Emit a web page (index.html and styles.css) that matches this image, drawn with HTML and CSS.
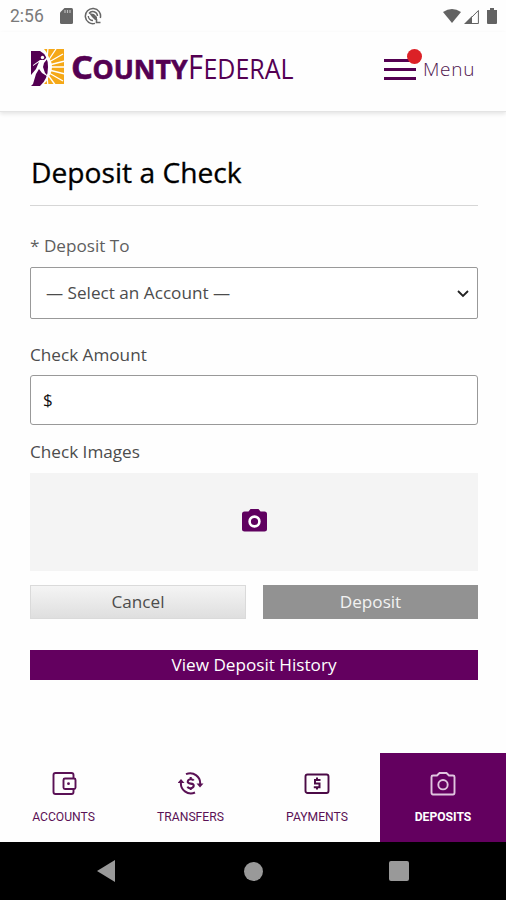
FILE: index.html
```html
<!DOCTYPE html>
<html lang="en">
<head>
<meta charset="utf-8">
<title>Deposit a Check</title>
<link rel="stylesheet" href="styles.css">
</head>
<body>
<div class="status">
  <span class="clock">2:56</span>
  <svg class="sd" width="13" height="16" viewBox="0 0 13 16"><path fill="#666" d="M4.500 0H11.500Q13 0 13 1.500V14.500Q13 16 11.500 16H1.500Q0 16 0 14.500V4.500Z"/><path stroke="#bbb" stroke-width="1.200" d="M5 2v3M7.500 2v3M10 2v3"/></svg>
  <svg class="sync" width="18" height="18" viewBox="0 0 18 18" fill="none" stroke="#666"><path stroke-width="1.500" d="M11 16.400A7.600 7.600 0 1 1 16.300 11"/><path stroke-width="1.400" d="M5 6.500A4.700 4.700 0 0 1 13.500 9M4.300 9A4.700 4.700 0 0 0 9 13.500"/><path fill="#666" stroke="none" d="M5 6l5 1 3 3v3h-2L8 10z"/><path stroke-width="1.600" d="M12.500 12v3.500h4"/></svg>
  <div class="signals">
    <svg width="18" height="14" viewBox="0 0 18 14"><path fill="#636363" d="M0 3Q9-3 18 3L9 14Z"/></svg>
    <svg width="15" height="15" viewBox="0 0 15 15"><path fill="#636363" d="M0 15 8 7v8z"/><path fill="none" stroke="#636363" d="M1.500 14.500 14.400 1.500v13z"/></svg>
    <svg class="battery" width="10" height="16" viewBox="0 0 10 16"><path fill="#636363" d="M3 0h4v2h3v13q0 1-1 1H1q-1 0-1-1V2h3z"/></svg>
  </div>
</div>
<header class="header">
  <svg class="emblem" width="33" height="38" viewBox="0 0 33 38">
    <path fill="#f5a817" d="M13 0H33V35H13Q19 30 19 18T13 0Z"/>
    <path stroke="#fff" stroke-width="1.300" d="M16 10 17-1M17 12 25 0M18 13 32 5M18 16 34 12M18 18H34M18 21 34 25M18 24 32 32M17 26 25 37M16 27 17 38"/>
    <path fill="#fff" d="M13 5Q21 9 21 18T13 31Z"/>
    <path fill="#540052" d="M0 2H9Q17 6 17 18T9 37H0Z"/>
    <circle cx="11.500" cy="8.500" r="1.700" fill="#fff"/>
    <path fill="#fff" d="M2 16 9 11 13 11 16 8 17 9 13 14 12 18 14 24 19 29 11 24 8 20 5 25 2 35 0 37V26L5 20 8 13 2 17Z"/>
  </svg>
  <svg class="wordmark" width="224" height="34" viewBox="0 0 224 34">
    <g class="word-bold"><text x="-1" y="27" font-size="32" textLength="22" lengthAdjust="spacingAndGlyphs">C</text><text x="20.500" y="27" font-size="27" textLength="95" lengthAdjust="spacingAndGlyphs">OUNTY</text></g>
    <g class="word-light"><text x="116" y="27" font-size="32" textLength="15" lengthAdjust="spacingAndGlyphs">F</text><text x="131.500" y="27" font-size="27" textLength="90" lengthAdjust="spacingAndGlyphs">EDERAL</text></g>
  </svg>
  <div class="menu"><span class="burger"><i></i><i></i><i></i><b class="dot"></b></span><span class="menu-label">Menu</span></div>
</header>
<main class="main">
  <h1 class="title">Deposit a Check</h1>
  <div class="label to-label">* Deposit To</div>
  <div class="field select"><span class="placeholder">— Select an Account —</span>
    <svg class="chevron" width="12" height="8" viewBox="0 0 12 8"><path fill="none" stroke="#222" stroke-width="1.800" d="M1 1l5 5 5-5"/></svg></div>
  <div class="label amount-label">Check Amount</div>
  <div class="field amount">$</div>
  <div class="label images-label">Check Images</div>
  <div class="capture">
    <svg width="25" height="23" viewBox="0 0 25 23"><path fill="#5f005f" d="M2.500 2.500H6.500L8.500 0H16.500L18.500 2.500H22.500Q25 2.500 25 5V20.500Q25 22.500 22.500 22.500H2.500Q0 22.500 0 20.500V5Q0 2.500 2.500 2.500Z"/><circle cx="12.500" cy="12.500" r="4.900" fill="none" stroke="#fff" stroke-width="2.600"/></svg>
  </div>
  <div class="buttons"><div class="btn cancel">Cancel</div><div class="btn deposit">Deposit</div></div>
  <div class="history">View Deposit History</div>
</main>
<nav class="tabs">
  <div class="tab"><svg width="26" height="26" viewBox="0 0 26 26" fill="none" stroke="#5a1155" stroke-width="1.900"><path d="M22.500 7V4Q22.500 2 20.500 2H4.500Q2.500 2 2.500 4V21Q2.500 23 4.500 23H20.500Q22.500 23 22.500 21V18"/><rect x="12.500" y="7.500" width="12" height="10.500" rx="1.500"/><circle cx="17.500" cy="12.700" r="1.400" fill="#5a1155" stroke="none"/></svg><span class="t-accounts">ACCOUNTS</span></div>
  <div class="tab"><svg width="26" height="26" viewBox="0 0 26 26" fill="none" stroke="#5a1155" stroke-width="2"><path d="M8 3.200A10 10 0 0 1 22 14M17 21.500A10 10 0 0 1 3 11"/><path fill="#5a1155" stroke="none" d="M18.500 12.500h7l-3.500 4zM-.5 12h7L3 8z"/><path stroke-width="2.100" d="M15.700 9.500Q15 8.200 12.700 8.200T9.800 10.200 12.700 12.600 15.700 15 12.700 17.200 9.500 15.700M12.700 6v2M12.700 17v2"/></svg><span class="t-transfers">TRANSFERS</span></div>
  <div class="tab"><svg width="26" height="26" viewBox="0 0 26 26" fill="none" stroke="#4b0a46" stroke-width="1.900"><rect x="1.500" y="3.500" width="23" height="18.500" rx="2"/><path stroke-width="2" d="M16.500 9H11V12.500H15.500V16.200H9.800M13 6.500V9M13 16V18.500"/></svg><span class="t-payments">PAYMENTS</span></div>
  <div class="tab active"><svg width="26" height="26" viewBox="0 0 26 26" fill="none" stroke="#e0c4df" stroke-width="1.900"><path d="M3 4.500H7L9.500 2H16.500L19 4.500H23Q24.500 4.500 24.500 6V21.500Q24.500 23.500 23 23.500H3Q1.500 23.500 1.500 21.500V6Q1.500 4.500 3 4.500Z"/><circle cx="13" cy="13.700" r="4.700"/></svg><span class="t-deposits">DEPOSITS</span></div>
</nav>
<div class="system">
  <svg width="18" height="22" viewBox="0 0 18 22"><path fill="#999" d="M18 0V22L0 11Z"/></svg>
  <span class="home"></span>
  <span class="recent"></span>
</div>
</body>
</html>
```
FILE: styles.css
```css
* { box-sizing: border-box; }
body {
  margin: 0;
  width: 506px;
  height: 900px;
  display: flex;
  flex-direction: column;
  overflow: hidden;
  background: #fefefe;
  font-family: "Open Sans", sans-serif;
  color: #4c4c4c;
}
svg { display: block; flex: none; }

.status { height: 32px; display: flex; align-items: center; padding: 0 9px 0 10px; }
.clock { width: 50px; font: 400 17.500px/32px Roboto, sans-serif; color: #7a7a7a; }
.sync { margin-left: 11px; }
.signals { margin-left: auto; display: flex; align-items: center; gap: 3px; }
.battery { margin-left: 5px; }

.header {
  height: 80px;
  display: flex;
  align-items: flex-start;
  padding: 17px 30px 0 31px;
  border-bottom: 1px solid #e4e4e4;
  box-shadow: 0 2px 4px rgba(0, 0, 0, .1);
}
.wordmark { margin: 3px 0 0 8px; overflow: visible; fill: #540052; }
.word-bold { font-weight: 700; stroke: #540052; stroke-width: .6px; }
.word-light { font-weight: 400; }
.menu { margin: 9px 0 0 auto; display: flex; }
.burger { position: relative; width: 32px; display: flex; flex-direction: column; gap: 6px; padding-top: 1px; }
.burger i { height: 3px; background: #540052; }
.dot { position: absolute; left: 23px; top: -9px; width: 15px; height: 15px; border-radius: 50%; background: #dc2127; }
.menu-label { margin: -1px 0 0 7px; font-size: 19px; line-height: 24px; font-weight: 300; letter-spacing: .7px; color: #4f154d; width: 53px; }

.main { padding: 0 28px 0 30px; flex: 1; }
.title { margin: 0; padding: 41px 0 0 1px; height: 94px; border-bottom: 1px solid #d6d6d6; font-size: 28.200px; line-height: 38px; font-weight: 400; color: #000; -webkit-text-stroke: .3px #000; }
.label { font-size: 17.150px; line-height: 24px; }
.to-label { margin-top: 28px; color: #5e5e5e; }
.field { border: 1px solid #999; border-radius: 3px; display: flex; align-items: center; background: #fff; }
.select { height: 52px; margin-top: 9px; justify-content: space-between; padding: 0 8px 2px 15px; font-size: 17.150px; border-radius: 2px; }
.chevron { margin-top: 3px; }
.amount-label { margin-top: 24px; }
.amount { height: 50px; margin-top: 8px; padding: 0 0 1px 12px; font-size: 17px; color: #111; }
.images-label { margin-top: 15px; }
.capture { height: 98px; margin-top: 9px; padding-bottom: 3px; background: #f4f4f4; display: flex; align-items: center; justify-content: center; }
.buttons { display: grid; grid-template-columns: 216px 215px; justify-content: space-between; margin-top: 14px; }
.btn { height: 34px; text-align: center; font-size: 17.150px; line-height: 34px; }
.cancel { background: linear-gradient(#f5f5f5, #dedede); box-shadow: inset 0 0 0 1px #dadada; }
.deposit { background: #929292; color: #f2f2f2; }
.history { height: 30px; margin-top: 31px; background: #63005f; color: #fff; text-align: center; font-size: 17.150px; line-height: 30px; }

.tabs { height: 89px; display: grid; grid-template-columns: 127px 127px 126px 126px; }
.tab { display: flex; flex-direction: column; align-items: center; padding-top: 18px; font: 400 12.150px/16px Roboto, sans-serif; color: #5a1155; }
.tab span { margin-top: 12px; white-space: nowrap; }
.tab.active { background: #63005f; color: #fff; font-weight: 700; }

.system { height: 58px; background: #000; display: flex; align-items: center; padding: 0 97px; justify-content: space-between; }
.home { margin-left: 2px; width: 19px; height: 19px; border-radius: 50%; background: #999; }
.recent { width: 20px; height: 20px; border-radius: 2px; background: #999; }
```
